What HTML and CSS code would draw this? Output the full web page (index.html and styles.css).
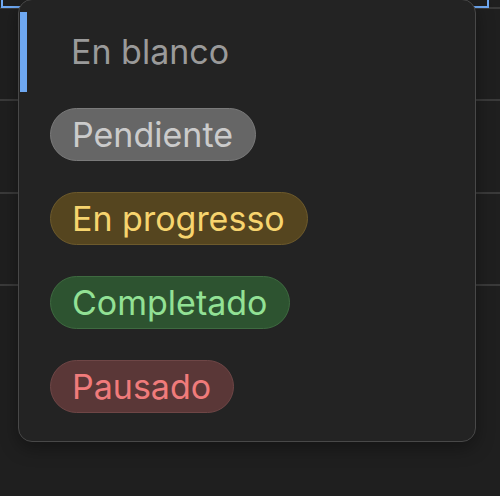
FILE: index.html
```html
<!DOCTYPE html>
<html lang="es">
<head>
<meta charset="utf-8">
<link rel="stylesheet" href="styles.css">
</head>
<body>
<div class="table">
  <div class="row row-top"><div class="cell-selected"></div></div>
  <div class="row row-a"></div>
  <div class="row row-b"></div>
  <div class="row row-c"></div>
</div>
<div class="popup">
  <div class="option option-active"><span class="label-blank">En blanco</span></div>
  <div class="option"><span class="pill pill-grey">Pendiente</span></div>
  <div class="option"><span class="pill pill-yellow">En progresso</span></div>
  <div class="option"><span class="pill pill-green">Completado</span></div>
  <div class="option"><span class="pill pill-red">Pausado</span></div>
</div>
</body>
</html>
```
FILE: styles.css
```css
html, body {
  margin: 0;
  padding: 0;
  background: #1f1f1f;
  width: 500px;
  height: 496px;
  overflow: hidden;
  font-family: Inter, "Noto Sans", sans-serif;
}
.table {
  display: flex;
  flex-direction: column;
}
.row {
  border-bottom: 2px solid #3a3a3a;
  box-sizing: border-box;
}
.row-top {
  height: 9px;
  position: relative;
}
.cell-selected {
  margin-left: 1px;
  width: 488px;
  height: 9px;
  margin-top: -1px;
  box-sizing: border-box;
  border: 2px solid #6ea8f2;
  border-top: none;
}
.row-a { height: 92px; }
.row-b { height: 93px; }
.row-c { height: 92px; }

.popup {
  position: absolute;
  left: 18px;
  top: -1px;
  width: 458px;
  height: 443px;
  box-sizing: border-box;
  background: #232323;
  border: 1px solid #484848;
  border-radius: 14px;
  box-shadow: 0 6px 18px rgba(0, 0, 0, 0.35);
  padding-top: 12px;
  display: flex;
  flex-direction: column;
}
.option {
  height: 84px;
  display: flex;
  align-items: center;
  padding-left: 31px;
  flex-shrink: 0;
}
.option-active {
  height: 80px;
  margin-left: 1px;
  border-left: 7px solid #6ea8f2;
  padding-left: 23px;
}
.label-blank {
  font-size: 34px;
  color: #9a9a9a;
  padding-left: 21px;
  line-height: 1.2;
}
.pill {
  font-size: 34px;
  line-height: 41px;
  padding: 5px 22px 5px 21px;
  border-radius: 27px;
  border: 1px solid transparent;
}
.pill-grey {
  background: #666666;
  border-color: #7a7a7a;
  color: #cbcbcb;
}
.pill-yellow {
  background: #55451f;
  border-color: #6d5a2c;
  color: #f7d46e;
}
.pill-green {
  background: #2d5330;
  border-color: #3e6a40;
  color: #92e195;
}
.pill-red {
  background: #5a3737;
  border-color: #6e4646;
  color: #f07b7b;
}
```
